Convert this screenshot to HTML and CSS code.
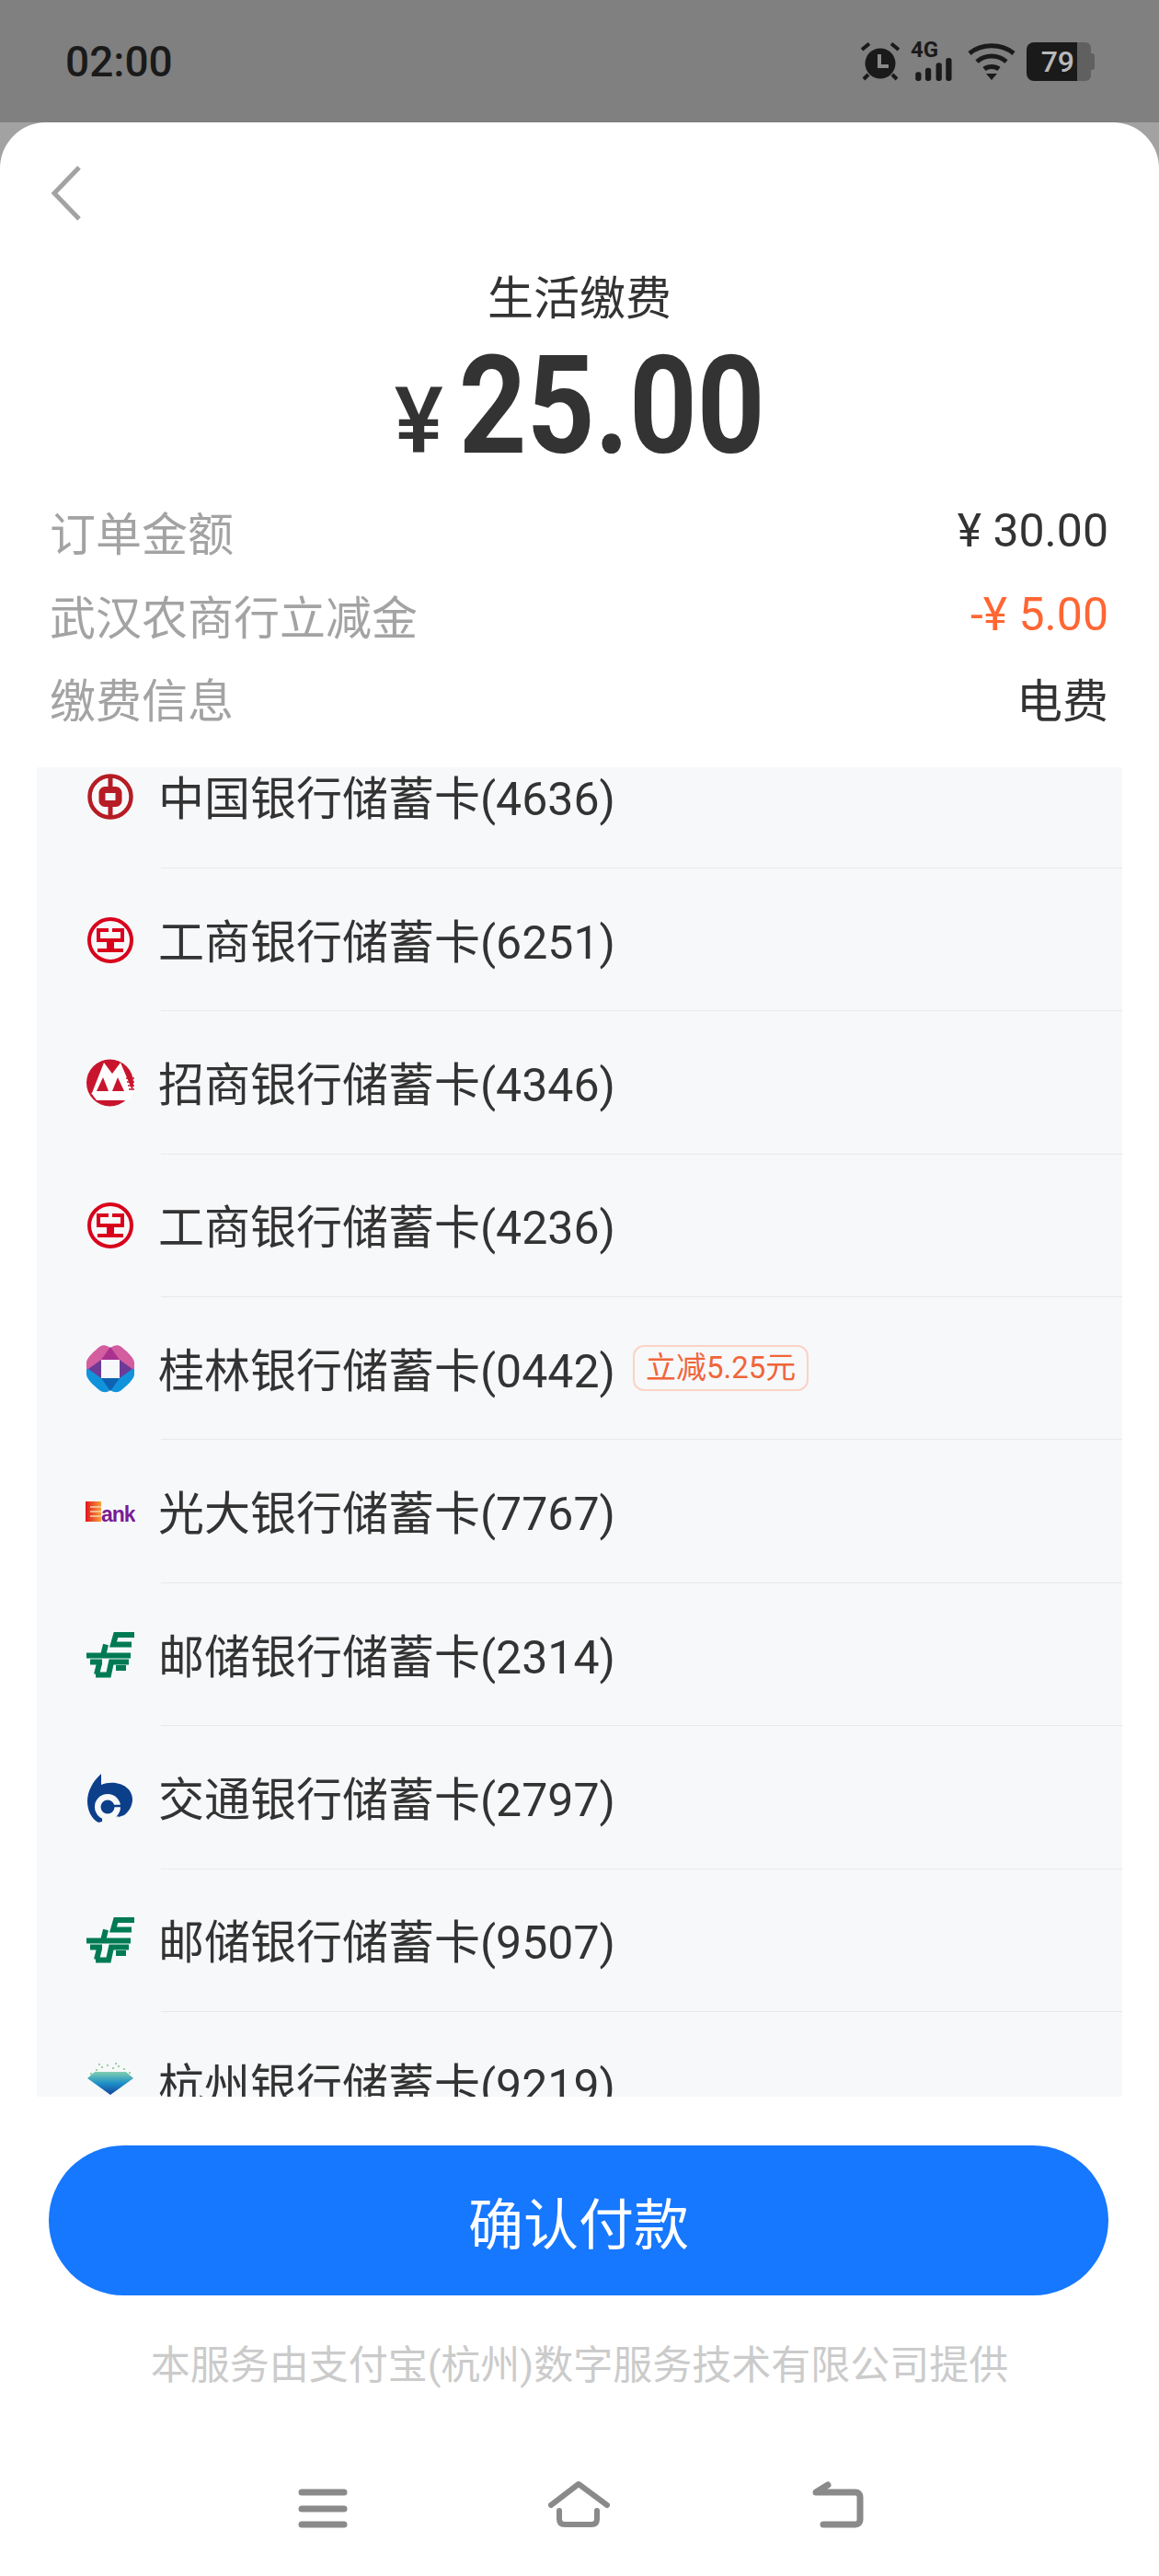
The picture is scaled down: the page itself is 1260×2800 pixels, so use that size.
FILE: index.html
```html
<!DOCTYPE html>
<html lang="zh-CN">
<head>
    <meta charset="UTF-8">
    <meta name="viewport" content="width=device-width, initial-scale=1.0">
    <title>生活缴费</title>
    <link rel="stylesheet" href="styles.css">
</head>
<body>
    <div class="status-bar">
        <span class="status-time">02:00</span>
        <div class="status-icons">
            <svg class="icon-alarm" width="42" height="42" viewBox="0 0 42 42">
                <circle cx="21" cy="23" r="16.5" fill="#1a1a1a"/>
                <path d="M1 8 L9 1.500 M41 8 L33 1.500 M8 35 L3 40 M34 35 L39 40" stroke="#1a1a1a" stroke-width="4" fill="none"/>
                <path d="M20 13 V26 H30" stroke="#8a8a8a" stroke-width="4" fill="none"/>
            </svg>
            <div class="signal">
                <span class="signal-label">4G</span>
                <svg width="48" height="28" viewBox="0 0 48 28">
                    <rect x="3" y="17" width="7" height="11" rx="3" fill="#1a1a1a"/>
                    <rect x="15" y="12" width="7" height="16" rx="3" fill="#1a1a1a"/>
                    <rect x="28" y="6" width="7" height="22" rx="3" fill="#1a1a1a"/>
                    <rect x="40" y="0" width="7" height="28" rx="3" fill="#1a1a1a"/>
                </svg>
            </div>
            <svg class="icon-wifi" width="52" height="42" viewBox="0 0 52 42">
                <path d="M2 12 C15 1 37 1 50 12 M10 21 C19 13 33 13 42 21 M18 29 C22 25.500 30 25.500 34 29" stroke="#1a1a1a" stroke-width="5" fill="none"/>
                <path d="M20 34 H32 L26 41Z" fill="#1a1a1a"/>
            </svg>
            <div class="battery">
                <div class="battery-level">79</div>
                <div class="battery-rest"></div>
                <div class="battery-tip"></div>
            </div>
        </div>
    </div>

    <div class="sheet">
        <div class="sheet-top">
            <svg width="32" height="60" viewBox="0 0 32 60">
                <path d="M30 2 L3 30 L30 58" stroke="#a3a3a3" stroke-width="5" fill="none"/>
            </svg>
        </div>
        <div class="sheet-title">生活缴费</div>
        <div class="total"><span class="total-sign">¥</span><span class="total-num">25.00</span></div>

        <div class="info">
            <div class="info-row"><span class="info-label">订单金额</span><span class="info-val">¥ 30.00</span></div>
            <div class="info-row"><span class="info-label">武汉农商行立减金</span><span class="info-val discount">-¥ 5.00</span></div>
            <div class="info-row"><span class="info-label">缴费信息</span><span class="info-val">电费</span></div>
        </div>

        <div class="card-list">
            <div class="card-scroll">
                <div class="card-row">
                    <svg class="bank-logo" viewBox="0 0 54 54">
                        <circle cx="27" cy="27" r="22.500" fill="none" stroke="#b61c24" stroke-width="4.500"/>
                        <rect x="18" y="19.500" width="18" height="15" rx="3" fill="none" stroke="#b61c24" stroke-width="7"/>
                        <path d="M27 4 V17 M27 37 V50" stroke="#b61c24" stroke-width="5"/>
                    </svg>
                    <div class="card-main"><span class="card-name">中国银行储蓄卡(4636)</span></div>
                </div>
                <div class="card-row">
                    <svg class="bank-logo" viewBox="0 0 54 54">
                        <circle cx="27" cy="27" r="23" fill="none" stroke="#d9001b" stroke-width="4"/>
                        <path d="M25 16 H14 V27 H25 V38 H13 M29 16 H40 V27 H29 V38 H41" fill="none" stroke="#d9001b" stroke-width="4"/>
                    </svg>
                    <div class="card-main"><span class="card-name">工商银行储蓄卡(6251)</span></div>
                </div>
                <div class="card-row">
                    <svg class="bank-logo" viewBox="0 0 54 54">
                        <circle cx="26.500" cy="27" r="25.500" fill="#c8152d"/>
                        <path d="M7 38 L20 5 L29 17 L38 5 L52 38Z" fill="#fff"/>
                        <path d="M19 21 L12 36 H25Z M35 21 L29 36 H42Z" fill="#c8152d"/>
                        <path d="M6 38 H52 L47 46 H12Z" fill="#fff"/>
                        <path d="M44 22 H53 M45 26 H53 M46 30 H53 M47 34 H53" stroke="#c8152d" stroke-width="1.500"/>
                    </svg>
                    <div class="card-main"><span class="card-name">招商银行储蓄卡(4346)</span></div>
                </div>
                <div class="card-row">
                    <svg class="bank-logo" viewBox="0 0 54 54">
                        <circle cx="27" cy="27" r="23" fill="none" stroke="#d9001b" stroke-width="4"/>
                        <path d="M25 16 H14 V27 H25 V38 H13 M29 16 H40 V27 H29 V38 H41" fill="none" stroke="#d9001b" stroke-width="4"/>
                    </svg>
                    <div class="card-main"><span class="card-name">工商银行储蓄卡(4236)</span></div>
                </div>
                <div class="card-row">
                    <svg class="bank-logo" viewBox="0 0 54 54">
                        <path d="M1 27 V20 C1 15 10 7 15 3 C19 0 23 1 27 4 C31 1 35 0 39 3 C44 7 53 15 53 20 V27Z" fill="#d45d9f"/>
                        <path d="M1 27 V33 C1 38 10 46 15 50 C19 53 23 53 27 50 C31 53 35 53 39 50 C44 46 53 38 53 33 V27Z" fill="#1193dc"/>
                        <path d="M17 17 L27 3 L37 17Z" fill="#a9328f"/>
                        <path d="M17 17 V27 H3Z M37 17 V27 H51Z" fill="#6d3a97"/>
                        <path d="M17 37 V27 H3Z M37 37 V27 H51Z" fill="#6d3a97"/>
                        <path d="M17 37 L27 51 L37 37Z" fill="#0d62b2"/>
                        <rect x="17" y="17" width="20" height="20" fill="#f7f8fa"/>
                    </svg>
                    <div class="card-main"><span class="card-name">桂林银行储蓄卡(0442)</span><span class="card-tag">立减5.25元</span></div>
                </div>
                <div class="card-row">
                    <svg class="bank-logo" viewBox="0 0 54 54">
                        <defs>
                            <linearGradient id="ceb" x1="0" x2="1" y1="0" y2="0">
                                <stop offset="0" stop-color="#e0141e"/>
                                <stop offset="1" stop-color="#f7a23a"/>
                            </linearGradient>
                        </defs>
                        <rect x="0" y="16" width="17" height="22" fill="url(#ceb)"/>
                        <path d="M5 22 H17 M5 27 H17 M5 32 H17" stroke="#f9d3ae" stroke-width="1.500"/>
                        <text class="ceb-text" x="17" y="38">ank</text>
                    </svg>
                    <div class="card-main"><span class="card-name">光大银行储蓄卡(7767)</span></div>
                </div>
                <div class="card-row">
                    <svg class="bank-logo" viewBox="0 0 54 54">
                        <path d="M53 5 H33 L30 15.500 H50 M22 15.500 L19 27.500 M1 27.500 H49 M5 34.500 H18 M47 34.500 H28 L25 48.500 H11 M15 36 L12 48 M44 41 H33" fill="none" stroke="#007a53" stroke-width="6"/>
                    </svg>
                    <div class="card-main"><span class="card-name">邮储银行储蓄卡(2314)</span></div>
                </div>
                <div class="card-row">
                    <svg class="bank-logo" viewBox="0 0 54 54">
                        <path d="M17 1 V13 C31 7 51 13 51 29 C51 36 47 42 42 46 L30 50 L14 54 C6 50 2 40 2 31 C2 20 8 9 17 1Z" fill="#0b3f8a"/>
                        <circle cx="24" cy="37" r="14" fill="#f7f8fa"/>
                        <path d="M18 50 L36 47 L30 54 H18Z" fill="#f7f8fa"/>
                        <circle cx="24" cy="37" r="7.500" fill="#0b3f8a"/>
                        <path d="M24 36 H44" stroke="#0b3f8a" stroke-width="2.500"/>
                    </svg>
                    <div class="card-main"><span class="card-name">交通银行储蓄卡(2797)</span></div>
                </div>
                <div class="card-row">
                    <svg class="bank-logo" viewBox="0 0 54 54">
                        <path d="M53 5 H33 L30 15.500 H50 M22 15.500 L19 27.500 M1 27.500 H49 M5 34.500 H18 M47 34.500 H28 L25 48.500 H11 M15 36 L12 48 M44 41 H33" fill="none" stroke="#007a53" stroke-width="6"/>
                    </svg>
                    <div class="card-main"><span class="card-name">邮储银行储蓄卡(9507)</span></div>
                </div>
                <div class="card-row">
                    <svg class="bank-logo" viewBox="0 0 54 54">
                        <defs>
                            <linearGradient id="hz" x1="0" x2="0" y1="0" y2="1">
                                <stop offset="0" stop-color="#7fcfb0"/>
                                <stop offset="0.500" stop-color="#1d8fc8"/>
                                <stop offset="1" stop-color="#12439a"/>
                            </linearGradient>
                        </defs>
                        <path d="M2 21 L10 14 L44 14 L52 21 L27 39Z" fill="url(#hz)"/>
                        <path d="M5 16 h2 M11 12 h2 M17 9 h2 M23 7 h2 M29 10 h2 M35 8 h2 M41 11 h2 M47 15 h2 M14 6 h2 M32 5 h2" stroke="#9ad0a0" stroke-width="2"/>
                    </svg>
                    <div class="card-main"><span class="card-name">杭州银行储蓄卡(9219)</span></div>
                </div>
            </div>
        </div>

        <button class="pay-btn">确认付款</button>
        <div class="provider">本服务由支付宝(杭州)数字服务技术有限公司提供</div>

        <div class="nav-bar">
            <svg width="54" height="54" viewBox="0 0 54 54">
                <path d="M4 13 H50 M4 31 H50 M4 48 H50" stroke="#8a8a8a" stroke-width="7" stroke-linecap="round"/>
            </svg>
            <svg width="70" height="54" viewBox="0 0 70 54">
                <path d="M4 27 L34 4 L65 27" stroke="#8a8a8a" stroke-width="6" stroke-linecap="round" stroke-linejoin="round" fill="none"/>
                <path d="M13 33 V42 C13 46 15 48 19 48 H48 C52 48 54 46 54 42 V33" stroke="#8a8a8a" stroke-width="6" stroke-linecap="round" fill="none"/>
            </svg>
            <svg width="58" height="54" viewBox="0 0 58 54">
                <path d="M13 48 H48 C51 48 53 46 53 43 V18 C53 15 51 13 48 13 H5 L18 5" stroke="#8a8a8a" stroke-width="7" stroke-linecap="round" stroke-linejoin="round" fill="none"/>
            </svg>
        </div>
    </div>
</body>
</html>
```

FILE: styles.css
```css
* {
    box-sizing: border-box;
}
body {
    margin: 0;
    height: 2800px;
    overflow: hidden;
    background-color: #a2a2a2;
    font-family: Roboto, "Noto Sans CJK SC", sans-serif;
    color: #333;
}
.status-bar {
    height: 133px;
    background-color: #808080;
    display: flex;
    align-items: center;
    justify-content: space-between;
    padding: 0 70px 0 71px;
}
.status-time {
    font-size: 46px;
    font-weight: 500;
    color: #1a1a1a;
}
.status-icons {
    display: flex;
    align-items: center;
    gap: 12px;
}
.signal {
    width: 50px;
    height: 42px;
    display: flex;
    flex-direction: column;
    justify-content: space-between;
}
.signal-label {
    font-size: 24px;
    line-height: 17px;
    font-weight: 700;
    color: #1a1a1a;
}
.battery {
    display: flex;
    align-items: center;
}
.battery-level {
    width: 55px;
    height: 42px;
    background-color: #1a1a1a;
    border-radius: 8px 0 0 8px;
    color: #b8b8b8;
    font-size: 32px;
    font-weight: 500;
    line-height: 42px;
    text-align: right;
    padding-right: 3px;
}
.battery-rest {
    width: 15px;
    height: 42px;
    background-color: #606060;
    border-radius: 0 6px 6px 0;
}
.battery-tip {
    width: 4px;
    height: 18px;
    background-color: #606060;
    border-radius: 0 3px 3px 0;
}

.sheet {
    height: 2667px;
    background-color: #fff;
    border-radius: 50px 50px 0 0;
    display: flex;
    flex-direction: column;
}
.sheet-top {
    height: 134px;
    padding: 47px 0 0 56px;
}
.sheet-title {
    text-align: center;
    font-size: 50px;
    line-height: 70px;
    margin-top: 23px;
}
.total {
    display: flex;
    justify-content: center;
    align-items: baseline;
    gap: 17px;
    height: 150px;
    margin-top: 7px;
}
.total-sign {
    font-size: 100px;
    font-weight: 500;
    line-height: 150px;
}
/* the amount digits are narrower in the app's font than in Roboto */
.total-num {
    font-size: 148px;
    font-weight: 700;
    line-height: 150px;
    transform: scaleX(0.87);
    margin: 0 -25px;
}
.info {
    margin-top: 16px;
    padding: 0 55px 0 54px;
}
.info-row {
    display: flex;
    justify-content: space-between;
    align-items: center;
    height: 90.5px;
    padding-bottom: 2px;
    font-size: 50px;
}
.info-label {
    color: #a3a3a3;
}
.discount {
    color: #ff6634;
}

.card-list {
    margin: 29px 40px 0;
    height: 1445px;
    flex-shrink: 0;
    overflow: hidden;
    background-color: #f7f8fa;
}
.card-scroll {
    margin-top: -45px;
}
.card-row {
    height: 155.4px;
    display: flex;
    padding-left: 53px;
}
.bank-logo {
    width: 54px;
    height: 54px;
    flex-shrink: 0;
    align-self: center;
}
.card-main {
    flex: 1;
    margin-left: 28px;
    display: flex;
    align-items: center;
    gap: 19px;
    padding-bottom: 3px;
    border-bottom: 1px solid #e8e9eb;
    font-size: 50px;
}
.card-name {
    margin-left: -3px;
}
.card-tag {
    height: 50px;
    margin-top: 3px;
    padding: 0 12px;
    border: 2px solid #fbd3c5;
    border-radius: 12px;
    font-size: 33px;
    line-height: 46px;
    color: #f0653a;
}
.ceb-text {
    font-family: "Liberation Sans", sans-serif;
    font-size: 23px;
    font-weight: 700;
    fill: #7b1a92;
    letter-spacing: -1px;
}

.pay-btn {
    margin: 53px 55px 0 53px;
    height: 163px;
    flex-shrink: 0;
    border: none;
    border-radius: 82px;
    background-color: #1677ff;
    color: #fff;
    font-family: inherit;
    font-size: 60px;
}
.provider {
    margin-top: 46px;
    text-align: center;
    font-size: 43px;
    line-height: 60px;
    color: #cbcbcb;
}
.nav-bar {
    display: flex;
    justify-content: center;
    gap: 217px;
    margin-top: 95px;
    padding-left: 3px;
}
```
